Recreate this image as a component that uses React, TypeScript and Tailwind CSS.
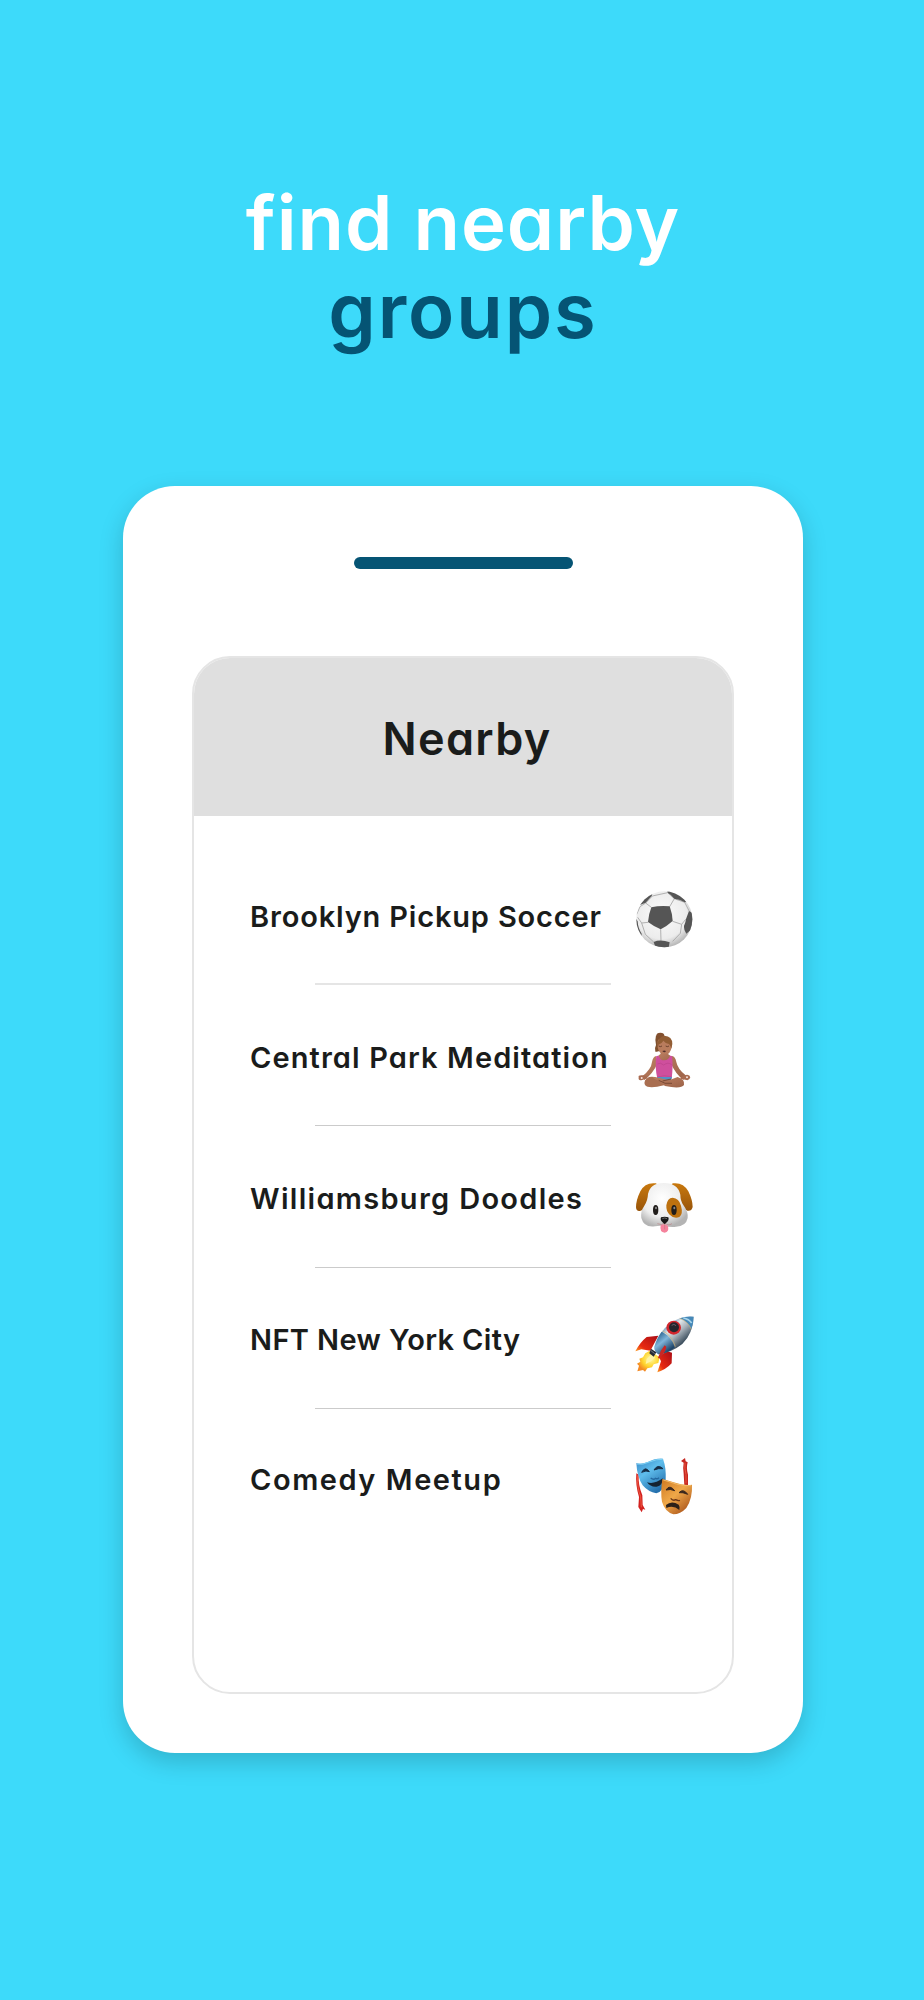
import type { ReactNode } from "react";
import clsx from "clsx";

interface Group {
  name: string;
  icon: ReactNode;
  rowClass: string;
  nameClass: string;
  dividerClass?: string;
}

function SoccerIcon() {
  return (
    <svg className="size-16" viewBox="39 24 192 192">
      <defs>
        <radialGradient id="ball" cx="0.45" cy="0.4" r="0.6">
          <stop offset="0" stopColor="#fbfbfb" />
          <stop offset="0.75" stopColor="#ececec" />
          <stop offset="1" stopColor="#b9b9b9" />
        </radialGradient>
        <clipPath id="ballClip">
          <circle cx="133" cy="118" r="84" />
        </clipPath>
      </defs>
      <circle cx="133" cy="118" r="84" fill="url(#ball)" />
      <g clipPath="url(#ballClip)">
        <g fill="none" stroke="#a3a3a3" strokeWidth="2.5">
          <path d="M94 82L77 69M77 69L97 48L143 38M77 69L60 80L50 103M149 80L163 56M163 56L143 38M163 56L194 67L208 94M158 124L185 133M185 133L197 118M185 133L181 160L158 184M122 148L123 182M84 127L65 129M65 129L53 112M65 129L76 163L101 186" />
        </g>
        <g fill="#555">
          <path d="M94 82Q120 76 149 79Q157 101 158 123Q140 139 122 148Q101 139 84 126Q86 102 94 82Z" />
          <path d="M61 64Q76 44 98 39L95 48L77 68L60 75Z" />
          <path d="M143 37Q140 31 148 32Q181 40 201 66L194 67Q181 58 163 56Q155 45 143 38Z" />
          <path d="M207 93L220 100L218 145L199 161Q191 150 192 138Q197 127 198 117Z" />
          <path d="M101 186Q122 177 149 187L145 207H108Z" />
          <path d="M46 114L53 124Q54 145 65 161L63 175L46 150Z" />
        </g>
      </g>
    </svg>
  );
}

function MeditationIcon() {
  return (
    <svg className="size-16" viewBox="39 27 192 192">
      <defs>
        <linearGradient id="skin" x1="0" y1="0" x2="1" y2="1">
          <stop offset="0" stopColor="#bd8062" />
          <stop offset="1" stopColor="#9c6248" />
        </linearGradient>
      </defs>
      <ellipse cx="121" cy="47" rx="12" ry="9" fill="#83502f" />
      <path d="M108 46Q104 62 108 75Q103 84 106 95Q117 97 120 89L123 55Z" fill="#80502e" />
      <path d="M122 93h21v16h-21z" fill="#9a6048" />
      <path d="M113 63Q126 48 144 53Q156 59 155 80Q152 104 133 105Q116 101 113 82Z" fill="#b97c5d" />
      <path d="M113 75Q113 51 133 47Q157 48 157 72L154 86Q152 77 147 72Q137 71 130 62Q125 72 115 74L112 88Z" fill="#925d34" />
      <path d="M116 78q5 4 10 0M137 78q5 4 10 0" fill="none" stroke="#5b3423" strokeWidth="2.4" />
      <path d="M127 93q6-3 11 0q-4 8-11 0Z" fill="#512e2a" />
      <path d="M109 108Q99 110 96 126Q94 147 67 169L73 180Q99 160 112 131ZM156 108Q166 110 169 126Q173 147 197 166L190 180Q166 160 153 131Z" fill="url(#skin)" />
      <path d="M116 106L123 101L143 101L151 107L155 131L109 131Z" fill="url(#skin)" />
      <path d="M109 108L116 107Q121 122 133 121Q146 120 150 107L156 108Q160 137 155 176H112Q104 140 109 108Z" fill="#cf4f9d" />
      <path d="M112 132Q122 126 131 135Q144 125 155 134M113 171Q131 164 155 170" fill="none" stroke="#bb438b" strokeWidth="2" />
      <path d="M112 171H156L151 189H119Z" fill="#5490c6" />
      <path d="M87 171Q69 180 75 195Q85 208 132 196L158 185L114 174Q100 168 87 171Z" fill="#a96e50" />
      <path d="M173 171Q196 179 192 195Q183 208 135 198L116 182Q99 176 98 171Q121 173 147 181Z" fill="url(#skin)" />
      <path d="M116 181Q134 194 156 190M128 183L153 177" fill="none" stroke="#794a35" strokeWidth="3" />
      <path d="M70 166Q53 164 56 172Q54 184 67 180L83 175L79 169ZM193 166Q209 161 211 172Q208 184 196 179L181 176L186 170Z" fill="#a96b50" />
      <circle cx="65" cy="174" r="3" fill="#f7e4df" />
      <circle cx="201" cy="172" r="3" fill="#f7e4df" />
    </svg>
  );
}

function DogIcon() {
  return (
    <svg className="size-16" viewBox="39 0 192 192">
      <defs>
        <radialGradient id="dogFace" cx="0.45" cy="0.35" r="0.65">
          <stop offset="0" stopColor="#fff" />
          <stop offset="0.65" stopColor="#ededed" />
          <stop offset="1" stopColor="#b4b4b4" />
        </radialGradient>
        <linearGradient id="dogEar" x1="0" y1="0" x2="0" y2="1">
          <stop offset="0" stopColor="#c9790e" />
          <stop offset="1" stopColor="#985409" />
        </linearGradient>
      </defs>
      <path d="M108 40Q75 36 61 64Q48 91 48 112Q49 125 60 123Q77 118 87 91L113 46Z" fill="url(#dogEar)" />
      <path d="M158 40Q190 36 205 64Q218 91 218 111Q214 125 202 122Q187 116 178 89L154 46Z" fill="url(#dogEar)" />
      <path d="M133 39Q91 38 84 72Q83 93 73 107Q61 124 64 144Q72 174 105 169Q119 166 132 168Q154 172 168 170Q198 169 203 144Q205 125 190 105Q181 92 181 74Q173 39 133 39Z" fill="url(#dogFace)" />
      <path d="M158 83Q177 84 183 107Q190 132 178 141Q163 148 149 134Q138 124 139 106Q142 84 158 83Z" fill="#bd710f" />
      <path d="M122 166Q134 159 144 168Q148 186 134 188Q118 187 122 166Z" fill="#f5829c" />
      <path d="M134 155V178M112 161Q126 168 134 158Q144 169 156 161" fill="none" stroke="#b88083" strokeWidth="2" />
      <ellipse cx="107" cy="120" rx="8" ry="15" fill="#211d1b" />
      <ellipse cx="162" cy="120" rx="8" ry="15" fill="#211d1b" />
      <ellipse cx="108" cy="114" rx="3" ry="4" fill="#888" />
      <ellipse cx="163" cy="114" rx="3" ry="4" fill="#888" />
      <path d="M123 142Q134 139 145 142Q149 151 137 160Q134 164 130 159Q119 151 123 142Z" fill="#171717" />
      <path d="M127 146Q134 142 141 146" fill="none" stroke="#777" strokeWidth="2.5" />
    </svg>
  );
}

function RocketIcon() {
  return (
    <svg className="size-16" viewBox="39 21 192 192">
      <defs>
        <linearGradient id="hull" gradientUnits="userSpaceOnUse" x1="130" y1="63" x2="181" y2="119">
          <stop offset="0" stopColor="#4d82ad" />
          <stop offset="0.3" stopColor="#e2e8eb" />
          <stop offset="0.6" stopColor="#aab3bb" />
          <stop offset="1" stopColor="#3f5160" />
        </linearGradient>
        <linearGradient id="hullBlue" gradientUnits="userSpaceOnUse" x1="105" y1="93" x2="143" y2="140">
          <stop offset="0" stopColor="#2a638f" />
          <stop offset="0.45" stopColor="#7fb5da" />
          <stop offset="1" stopColor="#1f456a" />
        </linearGradient>
        <linearGradient id="fin" x1="0" y1="1" x2="1" y2="0">
          <stop offset="0" stopColor="#ffa021" />
          <stop offset="0.3" stopColor="#e82a12" />
          <stop offset="1" stopColor="#a90c15" />
        </linearGradient>
        <radialGradient id="flame" cx="0.6" cy="0.4" r="0.6">
          <stop offset="0" stopColor="#fff9a4" />
          <stop offset="0.6" stopColor="#ffd52d" />
          <stop offset="1" stopColor="#f48923" />
        </radialGradient>
      </defs>
      <path d="M115 92L80 96Q60 112 46 139L64 133L91 137Z" fill="url(#fin)" />
      <path d="M142 139L156 143L155 175Q139 193 112 202L123 169L116 154Z" fill="url(#fin)" />
      <path d="M89 137L76 145L69 157L58 161L61 170L51 176L57 182L52 199L69 195L75 200L82 190L96 187L101 178L115 174L119 157Z" fill="url(#flame)" />
      <path d="M96 146L80 162L77 177L93 169L105 158Z" fill="#fff4a5" />
      <path d="M221 35Q183 31 150 56Q119 77 103 126Q102 138 115 148Q154 143 187 117Q219 85 221 35Z" fill="url(#hull)" />
      <path d="M125 80Q109 101 103 126Q102 139 115 148Q142 145 164 128Q155 94 125 80Z" fill="url(#hullBlue)" />
      <path d="M221 35Q201 32 179 40Q204 49 214 73Q221 55 221 35Z" fill="#4588b8" />
      <path d="M190 39Q207 42 215 54" fill="none" stroke="#a6d4eb" strokeWidth="5" />
      <path d="M179 40Q204 49 214 73M128 78Q156 91 166 125" fill="none" stroke="#c7ad72" strokeWidth="2" />
      <ellipse cx="161" cy="68" rx="22" ry="21" fill="#d3252c" />
      <ellipse cx="162" cy="67" rx="15" ry="15" fill="#26262d" />
      <path d="M155 61q7-6 13 1" fill="none" stroke="#68606a" strokeWidth="3" />
      <path d="M134 121Q119 139 114 158Q119 165 127 151Q138 136 139 125Z" fill="#c92824" />
      <path d="M93 131L109 142L101 155L88 145Z" fill="#252934" />
      <path d="M93 137L104 146" stroke="#717b85" strokeWidth="3" />
    </svg>
  );
}

function MasksIcon() {
  return (
    <svg className="size-16" viewBox="39 24 192 192">
      <defs>
        <linearGradient id="maskBlue" x1="0" y1="0" x2="0.6" y2="1">
          <stop offset="0" stopColor="#3586c6" />
          <stop offset="0.45" stopColor="#5fbdec" />
          <stop offset="1" stopColor="#2571ae" />
        </linearGradient>
        <linearGradient id="maskGold" x1="0" y1="0" x2="0.8" y2="1">
          <stop offset="0" stopColor="#cf7820" />
          <stop offset="0.5" stopColor="#efa849" />
          <stop offset="1" stopColor="#a85119" />
        </linearGradient>
      </defs>
      <path d="M49 85L56 89Q54 119 67 151L68 180L76 194L69 192L65 202L55 186L57 156Q46 120 49 85Z" fill="#d3211f" />
      <path d="M53 91Q51 129 62 155L64 187" fill="none" stroke="#f36547" strokeWidth="2.5" />
      <path d="M195 39L197 49L203 52Q198 70 204 89V121H193L191 86Q188 68 191 53L183 48Z" fill="#c62721" />
      <path d="M195 53Q193 71 198 88V115" fill="none" stroke="#ef6145" strokeWidth="2.5" />
      <path d="M49 54Q61 59 83 51Q108 39 129 41Q139 69 137 104Q132 138 109 145Q85 141 68 121Q51 95 49 54Z" fill="url(#maskBlue)" />
      <path d="M51 57Q67 61 88 51Q109 42 128 43" fill="none" stroke="#81d4f6" strokeWidth="3" />
      <path d="M65 82Q76 62 88 80Q79 75 65 82ZM102 75Q113 56 129 71Q116 69 102 75Z" fill="#152d47" stroke="#152d47" strokeWidth="3" />
      <path d="M81 112Q103 119 128 100Q129 122 110 125Q92 127 81 112Z" fill="#152331" />
      <path d="M92 99Q101 106 106 100Q111 103 117 98" fill="none" stroke="#2268a0" strokeWidth="4" />
      <path d="M127 102Q142 106 161 112Q190 122 216 119Q218 160 199 189Q181 208 160 208Q134 199 126 170Q121 142 127 102Z" fill="url(#maskGold)" />
      <path d="M130 105Q151 111 169 117Q190 123 213 122" fill="none" stroke="#f3bb68" strokeWidth="3" />
      <path d="M138 135Q149 117 164 137Q151 131 138 135ZM177 143Q190 129 203 148Q188 141 177 143Z" fill="#38251c" stroke="#38251c" strokeWidth="3" />
      <path d="M152 160Q160 169 167 164Q174 168 180 166" fill="none" stroke="#6d3818" strokeWidth="4" />
      <path d="M138 180Q155 165 176 179Q181 186 178 195Q160 179 139 189Z" fill="#2c2018" />
    </svg>
  );
}

const groups: Group[] = [
  {
    name: "Brooklyn Pickup Soccer",
    icon: <SoccerIcon />,
    rowClass: "h-[141px]",
    nameClass: "mt-[53px] tracking-[0.83px]",
    dividerClass: "h-0.5 bg-[#e5e5e5]",
  },
  {
    name: "Central Park Meditation",
    icon: <MeditationIcon />,
    rowClass: "h-[141px]",
    nameClass: "mt-[53px] tracking-[1.1px]",
    dividerClass: "h-px bg-[#cbcbcb]",
  },
  {
    name: "Williamsburg Doodles",
    icon: <DogIcon />,
    rowClass: "h-[142px]",
    nameClass: "mt-[53px] tracking-[1.3px]",
    dividerClass: "h-px bg-[#cbcbcb]",
  },
  {
    name: "NFT New York City",
    icon: <RocketIcon />,
    rowClass: "h-[141px]",
    nameClass: "mt-[52px] tracking-[0.38px]",
    dividerClass: "h-px bg-[#cbcbcb]",
  },
  {
    name: "Comedy Meetup",
    icon: <MasksIcon />,
    rowClass: "h-[141px]",
    nameClass: "mt-[51px] tracking-[1.55px]",
  },
];

function GroupRow({ group }: { group: Group }) {
  return (
    <li className={clsx("flex flex-col", group.rowClass)}>
      <div className="flex flex-1 items-start justify-between pl-14 pr-[35px]">
        <span
          className={clsx(
            "whitespace-nowrap text-[29px] font-semibold leading-10 text-[#1a1c1b]",
            group.nameClass
          )}
        >
          {group.name}
        </span>
        <div className="mt-11 shrink-0">{group.icon}</div>
      </div>
      {group.dividerClass && (
        <div className={clsx("ml-[121px] w-[296px] shrink-0", group.dividerClass)} />
      )}
    </li>
  );
}

export default function App() {
  return (
    <main className="flex h-[2000px] w-[924px] flex-col items-center bg-[#3ddafa] font-['Inter',sans-serif] [font-feature-settings:'cv11']">
      <h1 className="mt-[178px] flex h-[308px] flex-col items-center text-[76px] font-semibold leading-[88px]">
        <span className="pl-0.5 tracking-[0.95px] text-white">find nearby</span>
        <span className="pl-0.5 tracking-[1.9px] text-[#055474]">groups</span>
      </h1>

      <section className="ml-0.5 flex h-[1267px] w-[680px] flex-col items-center rounded-[52px] bg-white shadow-[0_9px_24px_rgba(0,0,0,0.18)]">
        <div className="ml-px mt-[71px] h-3 w-[219px] rounded-full bg-[#055474]" />

        <div className="mt-[87px] h-[1038px] w-[542px] overflow-hidden rounded-[38px] border-2 border-[#e5e5e5] bg-white">
          <header className="flex h-[158px] items-center justify-center bg-[#dfdfdf] pl-2 pt-0.5">
            <h2 className="text-[45px] font-semibold leading-none tracking-[1.3px] text-[#1a1c1b]">
              Nearby
            </h2>
          </header>
          <ul className="mt-7">
            {groups.map((group) => (
              <GroupRow key={group.name} group={group} />
            ))}
          </ul>
        </div>
      </section>
    </main>
  );
}
